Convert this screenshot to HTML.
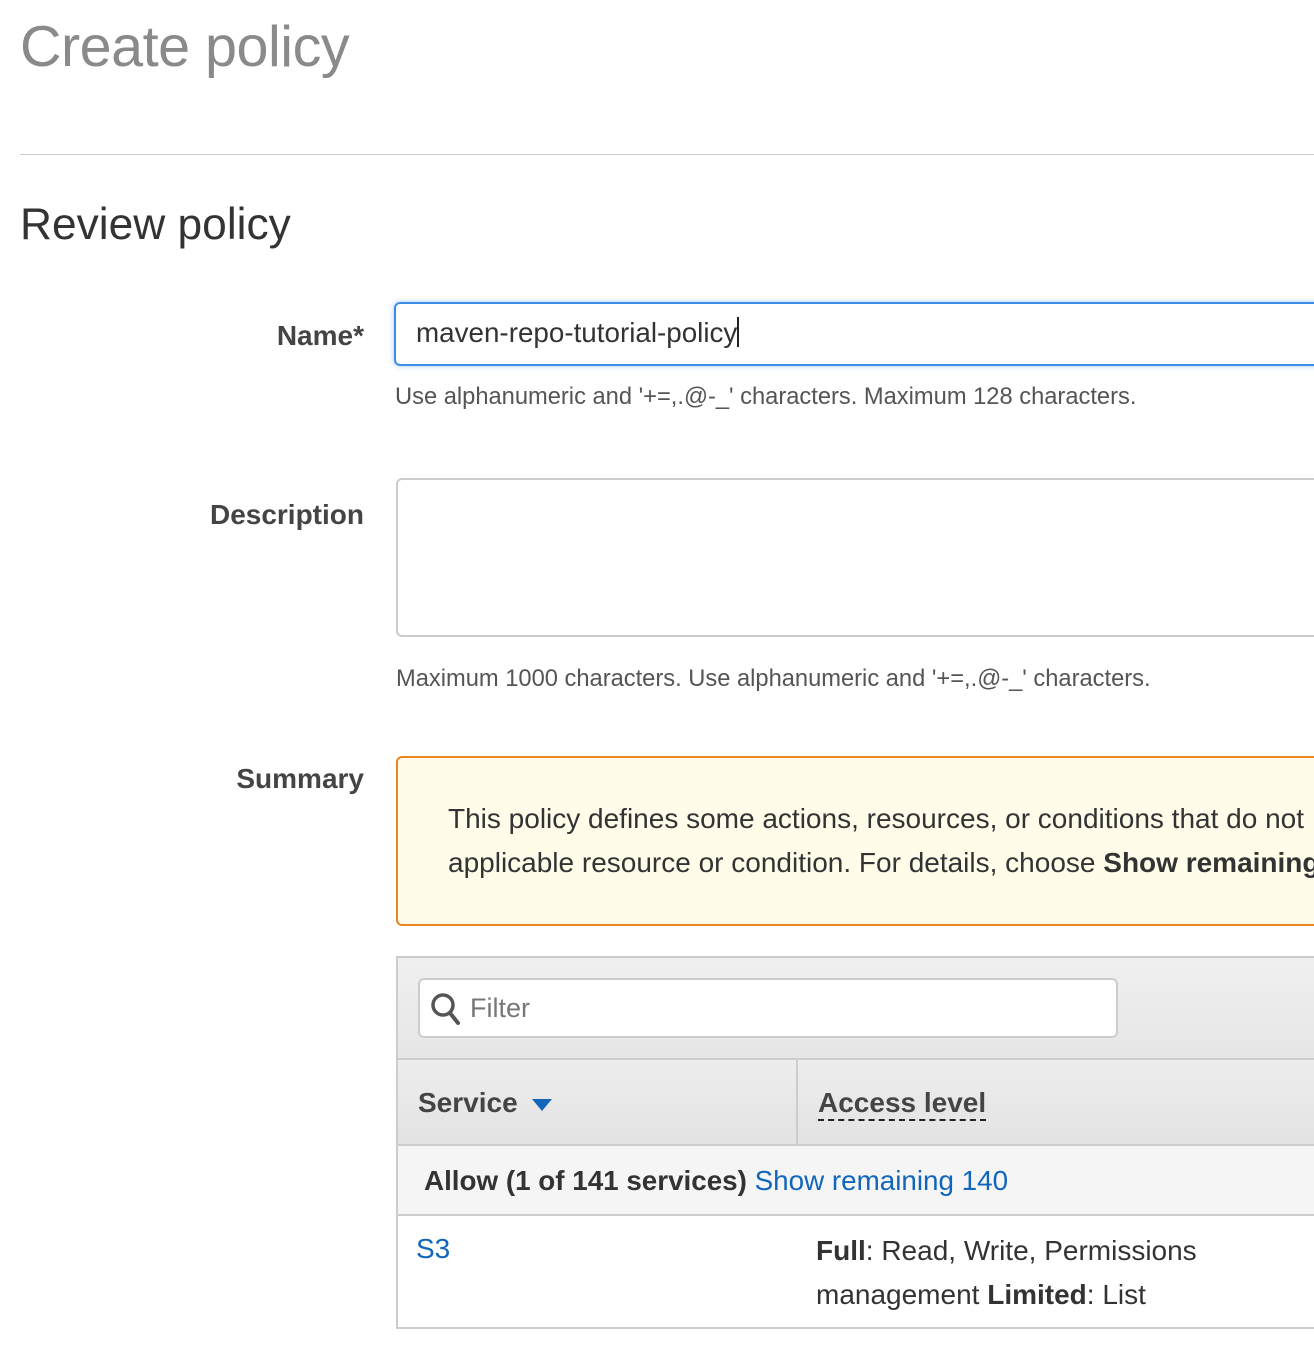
<!DOCTYPE html>
<html><head><meta charset="utf-8"><style>
body{margin:0;width:1314px;height:1348px;overflow:hidden;background:#fff;font-family:"Liberation Sans",Arial,sans-serif;color:#333;position:relative}
.a{position:absolute;white-space:nowrap}
</style></head><body>
<div class="a" style="left:20px;top:14px;font-size:57.5px;color:#8a8a8a;letter-spacing:-0.5px">Create policy</div>
<div class="a" style="left:20px;top:154px;width:1294px;height:1px;background:#ccc"></div>
<div class="a" style="left:20px;top:200px;font-size:44.3px;color:#333">Review policy</div>

<div class="a" style="right:950px;top:320px;font-size:28px;font-weight:bold;color:#444">Name*</div>
<div class="a" style="left:394px;top:302px;width:940px;height:60px;border:2px solid #3b8ee6;border-radius:6px;box-shadow:0 0 6px rgba(59,142,230,.45);box-sizing:content-box"></div>
<div class="a" style="left:416px;top:317px;font-size:27.8px;color:#333">maven-repo-tutorial-policy<span style="display:inline-block;width:2px;height:30px;background:#222;vertical-align:-5px"></span></div>
<div class="a" style="left:395px;top:384px;font-size:23.7px;color:#555">Use alphanumeric and '+=,.@-_' characters. Maximum 128 characters.</div>

<div class="a" style="right:950px;top:499px;font-size:28px;font-weight:bold;color:#444">Description</div>
<div class="a" style="left:396px;top:478px;width:940px;height:155px;border:2px solid #ccc;border-radius:6px"></div>
<div class="a" style="left:396px;top:666px;font-size:23.7px;color:#555">Maximum 1000 characters. Use alphanumeric and '+=,.@-_' characters.</div>

<div class="a" style="right:950px;top:763px;font-size:28px;font-weight:bold;color:#444">Summary</div>
<div class="a" style="left:396px;top:756px;width:940px;height:166px;border:2px solid #e8871e;border-radius:6px;background:#fffcea"></div>
<div class="a" style="left:448px;top:803px;font-size:28px;color:#333">This policy defines some actions, resources, or conditions that do not</div>
<div class="a" style="left:448px;top:847px;font-size:28px;color:#333">applicable resource or condition. For details, choose <b>Show remaining</b></div>

<div class="a" style="left:396px;top:956px;width:940px;height:372px;border:2px solid #ccc;border-bottom:none;box-sizing:border-box"></div>
<div class="a" style="left:398px;top:958px;width:920px;height:100px;background:linear-gradient(#f0f0f0,#e6e6e6)"></div>
<div class="a" style="left:418px;top:978px;width:700px;height:60px;background:#fff;border:2px solid #ccc;border-radius:6px;box-sizing:border-box"></div>
<svg class="a" style="left:430px;top:992px" width="32" height="34" viewBox="0 0 32 34"><circle cx="13" cy="13" r="10" fill="none" stroke="#555" stroke-width="3.5"/><line x1="20" y1="21" x2="28" y2="31" stroke="#555" stroke-width="4" stroke-linecap="round"/></svg>
<div class="a" style="left:470px;top:993px;font-size:27px;color:#777">Filter</div>
<div class="a" style="left:398px;top:1058px;width:920px;height:2px;background:#ccc"></div>
<div class="a" style="left:398px;top:1060px;width:920px;height:84px;background:linear-gradient(#ededed,#e3e3e3)"></div>
<div class="a" style="left:796px;top:1060px;width:2px;height:84px;background:#ccc"></div>
<div class="a" style="left:418px;top:1087px;font-size:28px;font-weight:bold;color:#444">Service</div>
<svg class="a" style="left:532px;top:1099px" width="20" height="13"><polygon points="0,0 20,0 10,12" fill="#1166bb"/></svg>
<div class="a" style="left:818px;top:1087px;font-size:28px;font-weight:bold;color:#444;border-bottom:2px dashed #222;line-height:32px">Access level</div>
<div class="a" style="left:398px;top:1144px;width:920px;height:2px;background:#ccc"></div>
<div class="a" style="left:398px;top:1146px;width:920px;height:68px;background:#f5f5f5"></div>
<div class="a" style="left:424px;top:1165px;font-size:27.8px;color:#333"><b>Allow (1 of 141 services)</b> <span style="color:#1166bb">Show remaining 140</span></div>
<div class="a" style="left:396px;top:1214px;width:918px;height:2px;background:#ccc"></div>
<div class="a" style="left:416px;top:1233px;font-size:28px;color:#1166bb">S3</div>
<div class="a" style="left:816px;top:1235px;font-size:28px;color:#333"><b>Full</b>: Read, Write, Permissions</div>
<div class="a" style="left:816px;top:1279px;font-size:28px;color:#333">management <b>Limited</b>: List</div>
<div class="a" style="left:396px;top:1327px;width:918px;height:2px;background:#ccc"></div>
</body></html>
